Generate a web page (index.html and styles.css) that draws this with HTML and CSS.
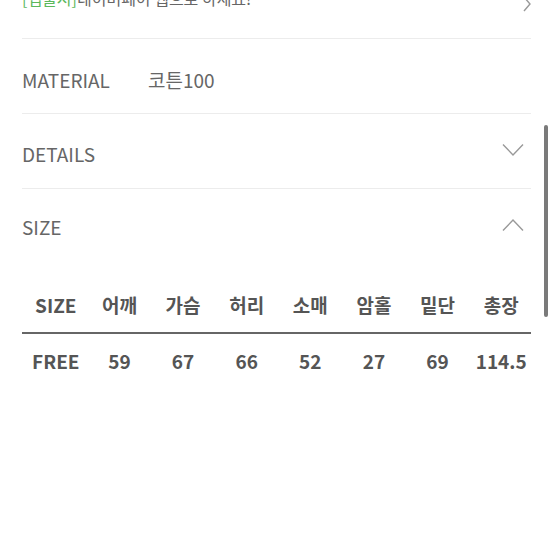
FILE: index.html
```html
<html>
<head>
  <meta charset="utf-8">
  <title>상품 정보</title>
  <link rel="stylesheet" href="styles.css">
</head>
<body>

<div class="info">

  <!-- pay notice -->
  <div class="notice">
    <span class="notice-text"><span class="notice-tag">[앱불시]</span>네이버페이 웹으로 하세요!</span>
    <svg class="arrow-right" width="10" height="16" viewBox="0 0 10 16">
      <polyline points="2,1 8,8 2,15" fill="none" stroke="#999" stroke-width="1.4"/>
    </svg>
  </div>

  <div class="row">
    <span class="label">MATERIAL</span>
    <span class="value">코튼100</span>
  </div>

  <div class="row details">
    <span class="label">DETAILS</span>
    <svg class="chevron" width="22" height="14" viewBox="0 0 22 14">
      <polyline points="1,1.5 11,12 21,1.5" fill="none" stroke="#999" stroke-width="1.4"/>
    </svg>
  </div>

  <div class="row open">
    <span class="label">SIZE</span>
    <svg class="chevron" width="22" height="14" viewBox="0 0 22 14">
      <polyline points="1,12.5 11,2 21,12.5" fill="none" stroke="#999" stroke-width="1.4"/>
    </svg>
  </div>

  <table class="size-table">
    <thead>
      <tr>
        <th>SIZE</th>
        <th>어깨</th>
        <th>가슴</th>
        <th>허리</th>
        <th>소매</th>
        <th>암홀</th>
        <th>밑단</th>
        <th>총장</th>
      </tr>
    </thead>
    <tbody>
      <tr>
        <td>FREE</td>
        <td>59</td>
        <td>67</td>
        <td>66</td>
        <td>52</td>
        <td>27</td>
        <td>69</td>
        <td>114.5</td>
      </tr>
    </tbody>
  </table>

</div>

<div class="scrollbar"></div>

</body>
</html>
```

FILE: styles.css
```css
body {
  margin: 0;
  background: #ffffff;
  font-family: "Noto Sans CJK KR", "Noto Sans", sans-serif;
  overflow: hidden;
}

.info {
  padding: 0 23px 0 22px;
}

/* top notice row */
.notice {
  display: flex;
  justify-content: space-between;
  align-items: flex-start;
  margin-top: -10px;
  border-bottom: 1px solid #ececec;
  box-sizing: border-box;
  height: 49px;
}

.notice-text {
  font-size: 16px;
  line-height: 20px;
  color: #666666;
  margin-top: -2px;
}

.notice-tag {
  color: #5cb85c;
}

.arrow-right {
  margin: 6px -1px 0 0;
}

/* accordion rows */
.row {
  display: flex;
  align-items: center;
  justify-content: space-between;
  padding: 28px 0 20px;
  border-bottom: 1px solid #ececec;
  font-size: 19px;
  line-height: 26px;
  color: #666666;
}

.row .label {
  flex: 0 0 126px;
}

.row .value {
  flex: 1;
}

.row.details {
  padding: 27px 0 21px;
}

.row.open {
  padding: 25px 0 23px;
  border-bottom: none;
}

.chevron {
  margin-right: 7px;
}

.details .chevron {
  margin-top: -8px;
}

.open .chevron {
  margin-top: -4px;
}

/* size table */
.size-table {
  width: 100%;
  margin-top: 15px;
  border-collapse: collapse;
  table-layout: fixed;
  font-size: 19px;
  line-height: 26px;
  font-weight: bold;
  color: #555555;
}

.size-table th {
  padding: 14px 0 14px 4px;
  border-bottom: 2px solid #666666;
  text-align: center;
}

.size-table td {
  padding: 14px 0 14px 4px;
  text-align: center;
}

.scrollbar {
  position: absolute;
  left: 544px;
  top: 125px;
  width: 4px;
  height: 192px;
  border-radius: 2px;
  background: #7a7a7a;
}
```
